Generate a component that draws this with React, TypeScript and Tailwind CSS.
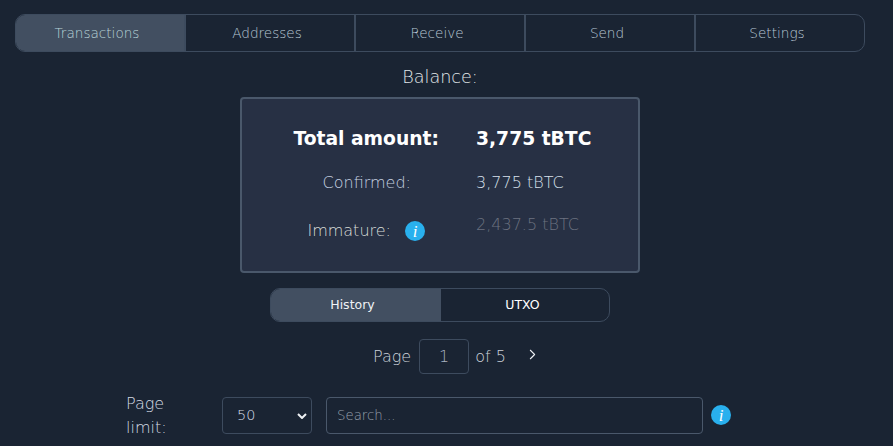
import { ChevronRight } from 'lucide-react'

const TABS = ['Transactions', 'Addresses', 'Receive', 'Send', 'Settings']

function InfoDot() {
  return (
    <span className="flex h-5 w-5 shrink-0 items-center justify-center rounded-full bg-[#29b0ee] font-['Liberation_Serif',serif] text-[17px] italic leading-none text-white">
      i
    </span>
  )
}

export default function App() {
  return (
    <div className="h-[446px] w-[893px] overflow-hidden bg-[#1a2433] font-['DejaVu_Sans',sans-serif] font-light text-[#e2e8f0]">
      <div className="w-[880px]">
        <div className="px-[15px] pt-[14px]">
          <div className="flex h-[38px] w-[850px] overflow-hidden rounded-[10px] border border-[#3d4b5e]">
            {TABS.map((t, i) => (
              <div
                key={t}
                className={
                  i === 0
                    ? 'flex w-[168px] shrink-0 items-center justify-center bg-[#424f61] pr-[6px] text-[13.6px] text-[#b8d4d8]'
                    : 'flex w-[170px] shrink-0 items-center justify-center border-l-2 border-[#3d4b5e] pr-[6px] text-[13.6px] text-[#b8c6d4]'
                }
              >
                {t}
              </div>
            ))}
          </div>
        </div>

        <div className="mt-[14px] text-center text-[17.6px] leading-[22px] text-[#e2e8ea]">Balance:</div>

        <div className="mx-auto mt-[9px] flex h-[176px] w-[400px] flex-col rounded border-2 border-[#4a586b] bg-[#273044] pt-[27px]">
          <div className="flex h-[26px] items-center text-[18.72px] font-bold text-white">
            <div className="w-[197px] text-right">Total amount:</div>
            <div className="ml-[37px]">3,775 tBTC</div>
          </div>
          <div className="mt-[18px] flex h-[26px] items-center text-[16px] text-[#c6d0e0]">
            <div className="w-[169px] text-right">Confirmed:</div>
            <div className="ml-[65px] text-[#d8e0ec]">3,775 tBTC</div>
          </div>
          <div className="mt-[19px] flex h-[32px] items-start text-[16px]">
            <div className="flex h-[32px] w-[183px] items-center justify-end gap-[14px] text-[#d8dcd8]">
              <span>Immature:</span>
              <InfoDot />
            </div>
            <div className="ml-[51px] mt-[-2px] text-[#6c7280]">2,437.5 tBTC</div>
          </div>
        </div>

        <div className="mx-auto mt-[15px] flex h-[34px] w-[340px] overflow-hidden rounded-[10px] border border-[#3d4b5e] text-[12.5px] font-normal text-white">
          <div className="flex w-[170px] items-center justify-center bg-[#424f61] pr-[7px] text-[#f0f3f6]">History</div>
          <div className="flex w-[168px] items-center justify-center pr-[5px]">UTXO</div>
        </div>

        <div className="mt-[17px] flex h-[35px] items-center pl-[373px] text-[16px] text-[#ccd2da]">
          <span>Page</span>
          <div className="ml-[8px] flex h-[35px] w-[50px] items-center justify-center rounded border border-[#3d4b5e] text-[#a8b2c0]">1</div>
          <span className="ml-[6px]">of 5</span>
          <ChevronRight size={17} strokeWidth={1.5} className="ml-[18px] -translate-y-[2px] text-[#eef1f5]" />
        </div>

        <div className="mt-[18px] flex items-start pl-[126px]">
          <div className="w-[96px] text-[16px] leading-[24px] text-[#d4dae2]">
            Page
            <br />
            limit:
          </div>
          <div className="mt-[5px] flex h-[37px] w-[90px] items-center justify-between rounded border border-[#3d4b5e] pl-[14px] pr-[3px] text-[14.4px] text-[#d4dce6]">
            <span>50</span>
            <svg width="10" height="6" viewBox="0 0 10 6" className="mr-[1px]" fill="none" stroke="#edf0f3" strokeWidth="2">
              <path d="M1 1l4 4 4-4" />
            </svg>
          </div>
          <div className="ml-[14px] mt-[5px] flex h-[37px] w-[377px] items-center rounded border border-[#4a586b] pl-[10px] text-[13.33px] text-[#98a0ac]">
            Search...
          </div>
          <div className="ml-[8px] mt-[13px]">
            <InfoDot />
          </div>
        </div>
      </div>
    </div>
  )
}
